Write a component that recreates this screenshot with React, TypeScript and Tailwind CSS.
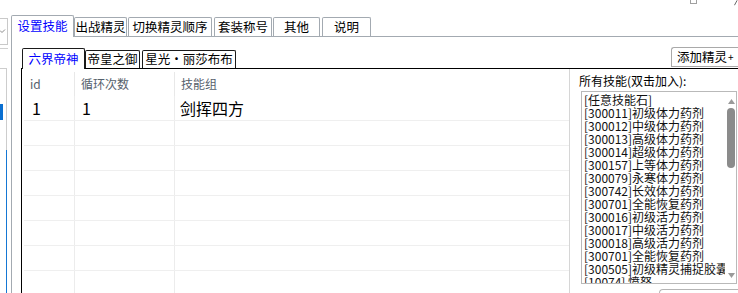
import React from 'react'

const topTabs = [
  { label: '设置技能', w: 'w-[63px]', ml: 'ml-0', active: true },
  { label: '出战精灵', w: 'w-[53px]', ml: 'ml-0', active: false },
  { label: '切换精灵顺序', w: 'w-[84px]', ml: 'ml-[1px]', active: false },
  { label: '套装称号', w: 'w-[58px]', ml: 'ml-[2px]', active: false },
  { label: '其他', w: 'w-[47px]', ml: 'ml-[1px]', active: false },
  { label: '说明', w: 'w-[49px]', ml: 'ml-[2px]', active: false },
]

const innerTabs = [
  { label: '六界帝神', w: 'w-[63px]', ml: 'ml-[1px]', active: true },
  { label: '帝皇之御', w: 'w-[55px]', ml: 'ml-0', active: false },
  { label: '星光・丽莎布布', w: 'w-[94px]', ml: 'ml-[2px]', active: false },
]

const skills = [
  '[任意技能石]',
  '[300011]初级体力药剂',
  '[300012]中级体力药剂',
  '[300013]高级体力药剂',
  '[300014]超级体力药剂',
  '[300157]上等体力药剂',
  '[300079]永寒体力药剂',
  '[300742]长效体力药剂',
  '[300701]全能恢复药剂',
  '[300016]初级活力药剂',
  '[300017]中级活力药剂',
  '[300018]高级活力药剂',
  '[300701]全能恢复药剂',
  '[300505]初级精灵捕捉胶囊',
  '[10074] 愤怒',
]

const rows = [
  { id: '1', loops: '1', group: '剑挥四方' },
  null, null, null, null, null, null, null,
]

function LeftStrip() {
  return (
    <div className="w-[11px] shrink-0 flex flex-col">
      <div className="mt-[18px] h-[27px] w-[8px] border border-l-0 border-[#c9c9c9] flex items-center">
        <svg width="6" height="5" viewBox="0 0 6 5">
          <polyline points="0,1.5 2,3.5 5,0.5" fill="none" stroke="#8a8a8a" strokeWidth="1" />
        </svg>
      </div>
      <div className="mt-[3px] h-px w-[8px] bg-[#cfcfcf]" />
      <div className="mt-[19px] flex-1 w-[7px] flex flex-col">
        <div className="h-[82px] border-t border-r border-[#cdcdcd] flex flex-col">
          <div className="mt-[35px] h-[16px] w-[3px] bg-[#0a6fd1]" />
        </div>
        <div className="flex-1 border-r border-[#1577d4]" />
      </div>
    </div>
  )
}

function ListBox() {
  return (
    <div className="relative shrink-0 ml-[2px] mt-[3px] h-[193px] w-[156px] border border-[#b9b9b9] overflow-hidden bg-white">
      <div className="pl-[2px] pt-[1px] text-[12px] leading-[13px] whitespace-nowrap text-[#111]">
        {skills.map((s, i) => (
          <div key={i}>{s}</div>
        ))}
      </div>
      <div className="absolute left-[143px] top-0 bottom-0 w-[12px] bg-white flex flex-col items-center">
        <svg width="7" height="5" viewBox="0 0 7 5" className="mt-[7px]">
          <polygon points="3.5,0 7,5 0,5" fill="#9a9a9a" />
        </svg>
        <div className="mt-[4px] h-[60px] w-[8px] rounded-full bg-[#8b8b8b]" />
        <div className="flex-1" />
        <svg width="7" height="5" viewBox="0 0 7 5" className="mb-[5px]">
          <polygon points="0,0 7,0 3.5,5" fill="#9a9a9a" />
        </svg>
      </div>
    </div>
  )
}

function Grid() {
  return (
    <div className="w-[548px] shrink-0 border-r border-[#d6d6d6] flex flex-col bg-white">
      <div className="h-[27px] shrink-0 pt-[3px] flex text-[12px] text-[#56616d]">
        <div className="w-[53px] border-r border-[#e8e8e8] pl-[8px] flex items-center leading-none">id</div>
        <div className="w-[100px] border-r border-[#e8e8e8] pl-[6px] flex items-center leading-none">循环次数</div>
        <div className="flex-1 pl-[6px] flex items-center leading-none">技能组</div>
      </div>
      {rows.map((r, i) => (
        <div key={i} className="ml-[2px] h-[25px] shrink-0 flex border-b border-[#efefef] text-[16px] leading-none text-black">
          <div className="w-[51px] border-r border-[#ececec] pl-[8px] flex items-center">{r?.id}</div>
          <div className="w-[100px] border-r border-[#ececec] pl-[7px] flex items-center">{r?.loops}</div>
          <div className="flex-1 pl-[5px] flex items-center">{r?.group}</div>
        </div>
      ))}
    </div>
  )
}

export default function App() {
  return (
    <div className="w-[738px] h-[293px] overflow-hidden bg-white flex text-black font-['Noto_Sans_CJK_SC','Noto_Sans',sans-serif]">
      <LeftStrip />

      <div className="flex-1 min-w-0 flex flex-col">
        <div className="h-[15px] shrink-0 flex items-start">
          <div className="ml-[679px] h-[4px] w-[8px] border border-t-0 border-[#a0a0a0]" />
          <svg width="4" height="6" viewBox="0 0 4 6" className="ml-[37px]">
            <line x1="0.5" y1="5.5" x2="3.5" y2="0" stroke="#555" strokeWidth="1" />
          </svg>
        </div>

        <div className="h-[21px] shrink-0 flex items-end">
          {topTabs.map((t) => (
            <div
              key={t.label}
              className={
                t.active
                  ? `${t.w} ${t.ml} h-[22px] -mb-px relative z-10 bg-white border border-b-0 border-[#a3aab1] rounded-t-[2px] flex items-center justify-center text-[12.5px] leading-none text-[#0000ff]`
                  : `${t.w} ${t.ml} h-[19px] bg-white border border-b-0 border-[#a3aab1] rounded-t-[2px] flex items-center justify-center text-[12.5px] leading-none`
              }
            >
              {t.label}
            </div>
          ))}
        </div>

        <div className="flex-1 min-h-0 border-l border-t border-[#a3aab1] pl-[9px] pt-[10px] flex flex-col bg-white">
          <div className="h-[21px] shrink-0 flex items-end">
            {innerTabs.map((t) => (
              <div
                key={t.label}
                className={
                  t.active
                    ? `${t.w} ${t.ml} h-[21px] -mb-px relative z-10 bg-white border border-b-0 border-[#1a1a1a] rounded-t-[2px] flex items-center justify-center text-[12.5px] leading-none text-[#0000ff]`
                    : `${t.w} ${t.ml} h-[18px] bg-white border border-b-0 border-[#1a1a1a] rounded-t-[2px] flex items-center justify-center text-[12.5px] leading-none`
                }
              >
                {t.label}
              </div>
            ))}
            <div className="ml-auto self-start h-[20px] w-[75px] shrink-0 -mr-[8px] border border-r-0 border-[#a9a9a9] rounded-tl-[3px] flex items-center pl-[5px] text-[12.5px] leading-none">
              添加精灵<span className="text-[10px] ml-[1px]">+</span>
            </div>
          </div>

          <div className="flex-1 min-h-0 flex border-t border-l border-black">
            <Grid />
            <div className="flex-1 min-w-0 pl-[9px] pt-[5px] flex flex-col">
              <div className="shrink-0 text-[12px] leading-[14px] whitespace-nowrap">所有技能(双击加入):</div>
              <ListBox />
              <div className="mt-[5px] ml-[80px] h-[20px] w-[90px] shrink-0 border border-r-0 border-[#b5b5b5] rounded-tl-[4px]" />
            </div>
          </div>
        </div>
      </div>
    </div>
  )
}
